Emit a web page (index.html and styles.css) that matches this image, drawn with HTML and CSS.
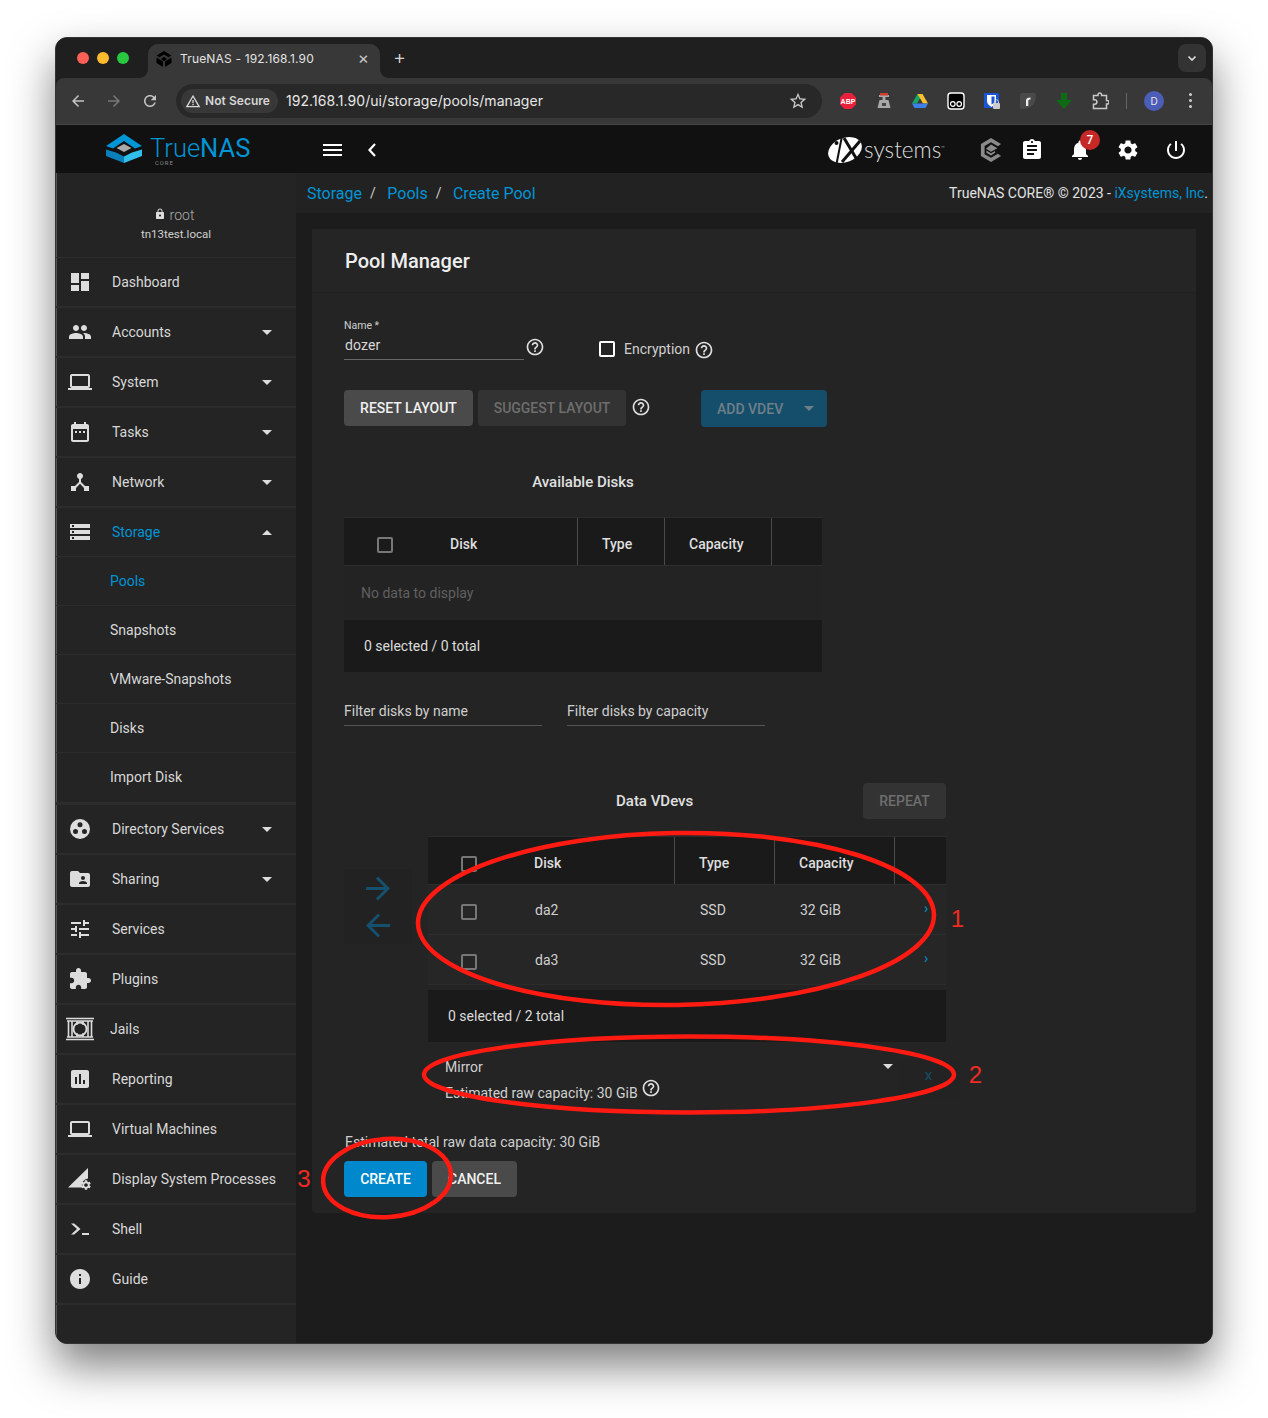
FILE: index.html
```html
<!DOCTYPE html>
<html lang="en">
<head>
<meta charset="utf-8">
<title>TrueNAS - 192.168.1.90</title>
<link rel="stylesheet" href="styles.css">
</head>
<body>
<svg class="sprite" aria-hidden="true">
  <symbol id="i-dash" viewBox="0 0 24 24"><path d="M3 13h8V3H3v10zm0 8h8v-6H3v6zm10 0h8V11h-8v10zm0-18v6h8V3h-8z"/></symbol>
  <symbol id="i-group" viewBox="0 0 24 24"><path d="M16 11c1.66 0 2.99-1.34 2.99-3S17.66 5 16 5c-1.66 0-3 1.34-3 3s1.34 3 3 3zm-8 0c1.66 0 2.99-1.34 2.99-3S9.66 5 8 5C6.34 5 5 6.34 5 8s1.34 3 3 3zm0 2c-2.33 0-7 1.17-7 3.5V19h14v-2.5c0-2.33-4.67-3.5-7-3.5zm8 0c-.29 0-.62.02-.97.05 1.16.84 1.97 1.97 1.97 3.45V19h6v-2.5c0-2.33-4.67-3.5-7-3.5z"/></symbol>
  <symbol id="i-laptop" viewBox="0 0 24 24"><path d="M20 18c1.1 0 1.99-.9 1.99-2L22 6c0-1.1-.9-2-2-2H4c-1.1 0-2 .9-2 2v10c0 1.1.9 2 2 2H0v2h24v-2h-4zM4 6h16v10H4V6z"/></symbol>
  <symbol id="i-cal" viewBox="0 0 24 24"><path d="M9 11H7v2h2v-2zm4 0h-2v2h2v-2zm4 0h-2v2h2v-2zm2-7h-1V2h-2v2H8V2H6v2H5c-1.11 0-1.99.9-1.99 2L3 20c0 1.1.89 2 2 2h14c1.1 0 2-.9 2-2V6c0-1.1-.9-2-2-2zm0 16H5V9h14v11z"/></symbol>
  <symbol id="i-net" viewBox="0 0 24 24"><path d="M17 16l-4-4V8.82C14.16 8.4 15 7.3 15 6c0-1.66-1.34-3-3-3S9 4.34 9 6c0 1.3.84 2.4 2 2.82V12l-4 4H3v5h5v-3.05l4-4.2 4 4.2V21h5v-5h-4z"/></symbol>
  <symbol id="i-storage" viewBox="0 0 24 24"><path d="M2 20h20v-4H2v4zm2-3h2v2H4v-2zM2 4v4h20V4H2zm4 3H4V5h2v2zm-4 7h20v-4H2v4zm2-3h2v2H4v-2z"/></symbol>
  <symbol id="i-dir" viewBox="0 0 24 24"><path fill-rule="evenodd" d="M12 2a10 10 0 1 0 0 20a10 10 0 0 0 0-20zM12 5.3a2.5 2.5 0 1 1 0 5a2.5 2.5 0 0 1 0-5zM7.5 12a2.5 2.5 0 1 1 0 5a2.5 2.5 0 0 1 0-5zM16.5 12a2.5 2.5 0 1 1 0 5a2.5 2.5 0 0 1 0-5z"/></symbol>
  <symbol id="i-share" viewBox="0 0 24 24"><path d="M20 6h-8l-2-2H4c-1.1 0-1.99.9-1.99 2L2 18c0 1.1.9 2 2 2h16c1.1 0 2-.9 2-2V8c0-1.1-.9-2-2-2zm-5 3c1.1 0 2 .9 2 2s-.9 2-2 2-2-.9-2-2 .9-2 2-2zm4 8h-8v-1c0-1.33 2.67-2 4-2s4 .67 4 2v1z"/></symbol>
  <symbol id="i-tune" viewBox="0 0 24 24"><path d="M3 17v2h6v-2H3zM3 5v2h10V5H3zm10 16v-2h8v-2h-8v-2h-2v6h2zM7 9v2H3v2h4v2h2V9H7zm14 4v-2H11v2h10zm-6-4h2V7h4V5h-4V3h-2v6z"/></symbol>
  <symbol id="i-plug" viewBox="0 0 24 24"><path d="M20.5 11H19V7c0-1.1-.9-2-2-2h-4V3.5C13 2.12 11.88 1 10.5 1S8 2.12 8 3.5V5H4c-1.1 0-1.99.9-1.99 2v3.8H3.5c1.49 0 2.7 1.21 2.7 2.7s-1.21 2.7-2.7 2.7H2V20c0 1.1.9 2 2 2h3.8v-1.5c0-1.49 1.21-2.7 2.7-2.7 1.49 0 2.7 1.21 2.7 2.7V22H17c1.1 0 2-.9 2-2v-4h1.5c1.38 0 2.5-1.12 2.5-2.5S21.88 11 20.5 11z"/></symbol>
  <symbol id="i-report" viewBox="0 0 24 24"><path d="M19 3H5c-1.1 0-2 .9-2 2v14c0 1.1.9 2 2 2h14c1.1 0 2-.9 2-2V5c0-1.1-.9-2-2-2zM9 17H7v-7h2v7zm4 0h-2V7h2v10zm4 0h-2v-4h2v4z"/></symbol>
  <symbol id="i-info" viewBox="0 0 24 24"><path d="M12 2C6.48 2 2 6.48 2 12s4.48 10 10 10 10-4.48 10-10S17.52 2 12 2zm1 15h-2v-6h2v6zm0-8h-2V7h2v2z"/></symbol>
  <symbol id="i-shell" viewBox="0 0 24 24"><path d="M3 6.5h3.2L12.5 12l-6.300 5.500H3L9 12z"/><path d="M14 16h7v2h-7z"/></symbol>
  <symbol id="i-gear" viewBox="0 0 24 24"><path d="M19.14 12.94c.04-.3.06-.61.06-.94 0-.32-.02-.64-.07-.94l2.03-1.58c.18-.14.23-.41.12-.61l-1.92-3.32c-.12-.22-.37-.29-.59-.22l-2.39.96c-.5-.38-1.03-.7-1.62-.94l-.36-2.54c-.04-.24-.24-.41-.48-.41h-3.84c-.24 0-.43.17-.47.41l-.36 2.54c-.59.24-1.13.57-1.62.94l-2.39-.96c-.22-.08-.47 0-.59.22L2.74 8.87c-.12.21-.08.47.12.61l2.03 1.58c-.05.3-.09.63-.09.94s.02.64.07.94l-2.03 1.58c-.18.14-.23.41-.12.61l1.92 3.32c.12.22.37.29.59.22l2.39-.96c.5.38 1.03.7 1.62.94l.36 2.54c.05.24.24.41.48.41h3.84c.24 0 .44-.17.47-.41l.36-2.54c.59-.24 1.13-.56 1.62-.94l2.39.96c.22.08.47 0 .59-.22l1.92-3.32c.12-.22.07-.47-.12-.61l-2.01-1.58zM12 15.6c-1.98 0-3.6-1.62-3.6-3.6s1.62-3.6 3.6-3.6 3.6 1.62 3.6 3.6-1.62 3.6-3.6 3.6z"/></symbol>
  <symbol id="i-help" viewBox="0 0 24 24"><path d="M11 18h2v-2h-2v2zm1-16C6.48 2 2 6.48 2 12s4.48 10 10 10 10-4.48 10-10S17.52 2 12 2zm0 18c-4.41 0-8-3.59-8-8s3.59-8 8-8 8 3.590 8 8-3.590 8-8 8zm0-14c-2.210 0-4 1.790-4 4h2c0-1.100.9-2 2-2s2 .9 2 2c0 2-3 1.750-3 5h2c0-2.250 3-2.500 3-5 0-2.210-1.790-4-4-4z"/></symbol>
  <symbol id="i-clip" viewBox="0 0 24 24"><path d="M19 3h-4.180C14.400 1.840 13.300 1 12 1c-1.300 0-2.400.84-2.820 2H5c-1.100 0-2 .9-2 2v14c0 1.100.9 2 2 2h14c1.100 0 2-.9 2-2V5c0-1.100-.9-2-2-2zm-7 0c.55 0 1 .45 1 1s-.45 1-1 1-1-.45-1-1 .45-1 1-1zm2 14H7v-2h7v2zm3-4H7v-2h10v2zm0-4H7V7h10v2z"/></symbol>
  <symbol id="i-bell" viewBox="0 0 24 24"><path d="M12 22c1.100 0 2-.9 2-2h-4c0 1.100.89 2 2 2zm6-6v-5c0-3.070-1.640-5.640-4.500-6.320V4c0-.83-.67-1.500-1.500-1.500s-1.500.67-1.500 1.500v.68C7.630 5.360 6 7.920 6 11v5l-2 2v1h16v-1l-2-2z"/></symbol>
  <symbol id="i-power" viewBox="0 0 24 24"><path d="M13 3h-2v10h2V3zm4.830 2.170l-1.420 1.420C17.990 7.860 19 9.810 19 12c0 3.870-3.130 7-7 7s-7-3.130-7-7c0-2.190 1.010-4.140 2.580-5.420L6.170 5.170C4.230 6.820 3 9.260 3 12c0 4.970 4.030 9 9 9s9-4.030 9-9c0-2.740-1.230-5.180-3.170-6.830z"/></symbol>
  <symbol id="i-star" viewBox="0 0 24 24"><path d="M22 9.240l-7.190-.62L12 2 9.190 8.630 2 9.240l5.460 4.730L5.820 21 12 17.270 18.180 21l-1.630-7.030L22 9.240zM12 15.400l-3.760 2.270 1-4.280-3.320-2.880 4.380-.38L12 6.100l1.710 4.040 4.380.38-3.320 2.880 1 4.280L12 15.400z"/></symbol>
  <symbol id="i-lock" viewBox="0 0 24 24"><path d="M18 8h-1V6c0-2.760-2.240-5-5-5S7 3.240 7 6v2H6c-1.100 0-2 .9-2 2v10c0 1.100.9 2 2 2h12c1.100 0 2-.9 2-2V10c0-1.100-.9-2-2-2zm-6 9c-1.100 0-2-.9-2-2s.9-2 2-2 2 .9 2 2-.9 2-2 2zm3.100-9H8.900V6c0-1.710 1.390-3.100 3.100-3.100 1.710 0 3.100 1.390 3.100 3.100v2z"/></symbol>
  <symbol id="i-reload" viewBox="0 0 24 24"><path d="M17.650 6.350C16.200 4.900 14.210 4 12 4c-4.420 0-7.990 3.580-7.990 8s3.570 8 7.990 8c3.730 0 6.840-2.550 7.730-6h-2.080c-.82 2.330-3.040 4-5.650 4-3.310 0-6-2.690-6-6s2.690-6 6-6c1.660 0 3.140.69 4.220 1.780L13 11h7V4l-2.350 2.350z"/></symbol>
  <symbol id="i-back" viewBox="0 0 24 24"><path d="M20 11H7.830l5.590-5.590L12 4l-8 8 8 8 1.410-1.410L7.830 13H20v-2z"/></symbol>
  <symbol id="i-fwd" viewBox="0 0 24 24"><path d="M4 11h12.170l-5.590-5.590L12 4l8 8-8 8-1.410-1.410L16.170 13H4v-2z"/></symbol>
  <symbol id="i-warn" viewBox="0 0 24 24"><path d="M12 2.500 1 21.500h22zM12 6.500l7.500 13h-15zM11 10.500v5h2v-5zM11 16.500v2h2v-2z" fill-rule="evenodd"/></symbol>
</svg>

<div class="window">
  <div class="tabstrip">
    <div class="lights"><span class="light red"></span><span class="light amber"></span><span class="light green"></span></div>
    <div class="tab">
      <svg class="favicon" viewBox="0 0 16 16"><path d="M8 0 15.500 4.500 12.500 6.300 8 3.500 3.500 6.300.5 4.500z" fill="#000"/><path d="M8 5.800 11 8 8 10.200 5 8z" fill="#000"/><path d="M.5 6.500 7 10.500V16L.5 12zM15.500 6.500 9 10.500V16L15.500 12z" fill="#000"/></svg>
      <span class="tab-title">TrueNAS - 192.168.1.90</span>
      <span class="tab-close">×</span>
    </div>
    <span class="tab-new">+</span>
    <span class="tab-search"><svg viewBox="0 0 12 12" class="tab-chev"><path d="M2.500 4.500 6 8l3.500-3.500" fill="none" stroke="#ddd" stroke-width="1.600"/></svg></span>
  </div>

  <div class="toolbar">
    <svg class="nav-ic"><use href="#i-back"/></svg>
    <svg class="nav-ic dim"><use href="#i-fwd"/></svg>
    <svg class="nav-ic"><use href="#i-reload"/></svg>
    <div class="omnibox">
      <span class="chip"><svg class="chip-ic"><use href="#i-warn"/></svg>Not Secure</span>
      <span class="url">192.168.1.90/ui/storage/pools/manager</span>
      <svg class="star"><use href="#i-star"/></svg>
    </div>
    <div class="exts">
      <span class="ext"><svg viewBox="0 0 18 18"><path d="M5.500 1h7L17 5.500v7L12.500 17h-7L1 12.500v-7z" fill="#e8203c"/><text x="9" y="11.500" text-anchor="middle" class="abp">ABP</text></svg></span>
      <span class="ext"><svg viewBox="0 0 18 18"><path d="M4 3h10v2H10.500V8H13.500L15.500 16H2.500L4.500 8H7.500V5H4z" fill="#a8a8a8"/><path d="M5 1h8v2.500H5z" fill="#d23b30"/><path d="M7 11h4v3H7z" fill="#444"/></svg></span>
      <span class="ext"><svg viewBox="0 0 18 18"><path d="M6.500 2h5L6 11.500H1z" fill="#16a765"/><path d="M11.500 2 17 11.500h-5L6.500 2z" fill="#fdc02f"/><path d="M1 11.500h16L14.500 16h-11z" fill="#3f7fe8"/></svg></span>
      <span class="ext"><svg viewBox="0 0 18 18"><rect x="1" y="1" width="16" height="16" rx="3" fill="#000" stroke="#fff" stroke-width="1.400"/><circle cx="5.800" cy="12" r="2.300" fill="none" stroke="#fff" stroke-width="1.200"/><circle cx="12.200" cy="12" r="2.300" fill="none" stroke="#fff" stroke-width="1.200"/></svg></span>
      <span class="ext"><svg viewBox="0 0 18 18"><rect x="1" y="1" width="15" height="15" rx="1" fill="#1a55d8"/><path d="M4 3h9v6c0 3-2 4.500-4.500 6C6 13.500 4 12 4 9z" fill="#fff"/><path d="M8.500 4.500H11.500V9c0 1.500-1 2.500-3 3.500z" fill="#1a55d8"/><rect x="10" y="11" width="7" height="6" rx="1" fill="#ccc"/><path d="M11.500 11V9.800a2 2 0 0 1 4 0V11" fill="none" stroke="#ccc" stroke-width="1"/></svg></span>
      <span class="ext"><svg viewBox="0 0 18 18"><path d="M3.500 1H15a2 2 0 0 1 2 2c0 8-4 14-14 14a2 2 0 0 1-2-2V3.500A2.500 2.500 0 0 1 3.500 1z" fill="#4a4a4a"/><path d="M7 14V8.500C7 6.500 8.500 5.500 11.500 5.500v2C10 7.500 9.300 8 9.300 9v5z" fill="#eee"/></svg></span>
      <span class="ext"><svg viewBox="0 0 18 18"><path d="M6 1h6v7h5l-8 9-8-9h5z" fill="#0d6b14"/></svg></span>
      <span class="ext"><svg viewBox="0 0 18 18"><path d="M2.500 3.500H7V2.800a1.800 1.800 0 0 1 3.600 0v.7h4.900v4.900h.7a1.800 1.800 0 0 1 0 3.600h-.7v4.500H2.500v-4.300h1.200a2.200 2.200 0 0 0 0-4.400H2.500z" fill="none" stroke="#c8c8c8" stroke-width="1.500"/></svg></span>
      <span class="ext-sep"></span>
      <span class="avatar">D</span>
      <span class="dots"><i></i><i></i><i></i></span>
    </div>
  </div>

  <header class="apphead">
    <div class="brand">
      <svg class="brand-mark" viewBox="0 0 36 30"><path d="M18 0 36 12 29 14.500 18 7 7 14.500 0 12z" fill="#0095d5"/><path d="M0 15.500 10 18.500 18 22.500V29L0 22z" fill="#0a7fb8"/><path d="M36 15.500 26 18.500 18 22.500V29L36 22z" fill="#31beec"/><path d="M18 10 25.500 14 18 18 10.500 14z" fill="#aaa"/></svg>
      <div class="brand-words"><span class="brand-name"><span class="brand-true">True</span>NAS</span><span class="brand-core">CORE</span></div>
    </div>
    <div class="head-main">
      <span class="burger"><i></i><i></i><i></i></span>
      <svg class="collapse" viewBox="0 0 10 16"><path d="M8 2 2.500 8 8 14" fill="none" stroke="#fff" stroke-width="2.200"/></svg>
      <div class="ix">
        <svg class="ix-mark" viewBox="0 0 36 28"><ellipse cx="18" cy="14" rx="17.500" ry="12" transform="rotate(-22 18 14)" fill="#fff"/><path d="M9.500 28 15 0" stroke="#111" stroke-width="2"/><path d="M17 2 32 27" stroke="#111" stroke-width="3"/><path d="M33 5 15 26" stroke="#111" stroke-width="3"/><circle cx="9.500" cy="7" r="2" fill="#111"/></svg>
        <span class="ix-word">systems</span><span class="ix-tm">™</span>
      </div>
      <span class="hcell narrow"><svg viewBox="0 0 24 28" class="ticker"><path d="M12 1 23 7.500 19.500 10 12 5.500 5 9.500V18.500L12 22.500 19.500 18 23 20.500 12 27 1 20.500V7.500z" fill="#8a8a8a"/><path d="M12 8 19 12 12 16 6.500 12.500zM7 14.500 12 17.500 16.500 15V17L12 20 7 17z" fill="#8a8a8a"/></svg></span>
      <span class="hcell"><svg class="hic"><use href="#i-clip"/></svg></span>
      <span class="hcell"><svg class="hic"><use href="#i-bell"/></svg><span class="badge">7</span></span>
      <span class="hcell"><svg class="hic"><use href="#i-gear"/></svg></span>
      <span class="hcell"><svg class="hic"><use href="#i-power"/></svg></span>
    </div>
  </header>

  <div class="body-row">
    <nav class="side">
      <div class="who">
        <div class="who-name"><svg class="who-lock"><use href="#i-lock"/></svg>root</div>
        <div class="who-host">tn13test.local</div>
      </div>
      <a class="row"><svg class="ic"><use href="#i-dash"/></svg><span>Dashboard</span></a>
      <a class="row"><svg class="ic"><use href="#i-group"/></svg><span>Accounts</span><i class="caret"></i></a>
      <a class="row"><svg class="ic"><use href="#i-laptop"/></svg><span>System</span><i class="caret"></i></a>
      <a class="row"><svg class="ic"><use href="#i-cal"/></svg><span>Tasks</span><i class="caret"></i></a>
      <a class="row"><svg class="ic"><use href="#i-net"/></svg><span>Network</span><i class="caret"></i></a>
      <a class="row row-open"><svg class="ic"><use href="#i-storage"/></svg><span class="blue">Storage</span><i class="caret up"></i></a>
      <div class="sub">
        <a class="sub-row blue">Pools</a>
        <a class="sub-row">Snapshots</a>
        <a class="sub-row">VMware-Snapshots</a>
        <a class="sub-row">Disks</a>
        <a class="sub-row">Import Disk</a>
      </div>
      <a class="row"><svg class="ic"><use href="#i-dir"/></svg><span>Directory Services</span><i class="caret"></i></a>
      <a class="row"><svg class="ic"><use href="#i-share"/></svg><span>Sharing</span><i class="caret"></i></a>
      <a class="row"><svg class="ic"><use href="#i-tune"/></svg><span>Services</span></a>
      <a class="row"><svg class="ic"><use href="#i-plug"/></svg><span>Plugins</span></a>
      <a class="row"><svg class="ic-jail" viewBox="0 0 28 24"><path d="M0 1.500h28M0 22.500h28M1 4h26M1 20h26" stroke="#ddd" stroke-width="1.400"/><path d="M2.500 4v16M6 4v16M22 4v16M25.500 4v16" stroke="#ddd" stroke-width="1.600"/><circle cx="14" cy="12" r="6.500" fill="none" stroke="#ddd" stroke-width="1.800"/><path d="M11 4v4M17 4v4M11 16v4M17 16v4" stroke="#ddd" stroke-width="1.400"/></svg><span>Jails</span></a>
      <a class="row"><svg class="ic"><use href="#i-report"/></svg><span>Reporting</span></a>
      <a class="row"><svg class="ic"><use href="#i-laptop"/></svg><span>Virtual Machines</span></a>
      <a class="row"><svg class="ic" viewBox="0 0 24 24"><path d="M0 20.500 20 1V11.500a7 7 0 0 0-6 9z" fill="#ddd"/><use href="#i-gear" x="12" y="12" width="12" height="12"/></svg><span>Display System Processes</span></a>
      <a class="row"><svg class="ic"><use href="#i-shell"/></svg><span>Shell</span></a>
      <a class="row"><svg class="ic"><use href="#i-info"/></svg><span>Guide</span></a>
    </nav>

    <main class="content">
      <div class="crumbs">
        <div class="crumb-path"><a class="blue">Storage</a><em>/</em><a class="blue">Pools</a><em>/</em><a class="blue">Create Pool</a></div>
        <div class="copyright">TrueNAS CORE® © 2023 - <a class="blue">iXsystems, Inc</a>.</div>
      </div>
      <section class="card">
        <h1 class="card-title">Pool Manager</h1>
        <div class="card-body">
          <div class="name-row">
            <div class="field">
              <label class="field-label">Name *</label>
              <div class="field-value">dozer</div>
            </div>
            <svg class="help help-name"><use href="#i-help"/></svg>
            <span class="check check-white"></span>
            <span class="enc">Encryption</span>
            <svg class="help"><use href="#i-help"/></svg>
          </div>

          <div class="actions">
            <button class="btn btn-grey">RESET LAYOUT</button>
            <button class="btn btn-off">SUGGEST LAYOUT</button>
            <svg class="help help-action"><use href="#i-help"/></svg>
            <button class="btn btn-add">ADD VDEV<i class="add-caret"></i></button>
          </div>

          <h2 class="avail-title">Available Disks</h2>
          <div class="dtable avail">
            <div class="dhead">
              <div class="cell c-check"><span class="check"></span><b>Disk</b></div>
              <div class="cell"><b>Type</b></div>
              <div class="cell"><b>Capacity</b></div>
              <div class="cell"></div>
            </div>
            <div class="empty">No data to display</div>
            <div class="dfoot">0 selected / 0 total</div>
          </div>

          <div class="filters">
            <div class="filter">Filter disks by name</div>
            <div class="filter">Filter disks by capacity</div>
          </div>

          <div class="vdev-head">
            <h2 class="vdev-title">Data VDevs</h2>
            <button class="btn btn-off btn-repeat">REPEAT</button>
          </div>
          <div class="vdev-wrap">
            <div class="movers">
              <svg class="mover"><use href="#i-fwd"/></svg>
              <svg class="mover"><use href="#i-back"/></svg>
            </div>
            <div class="dtable vdevs">
              <div class="dhead">
                <div class="cell c-check"><span class="check"></span><b>Disk</b></div>
                <div class="cell"><b>Type</b></div>
                <div class="cell"><b>Capacity</b></div>
                <div class="cell"></div>
              </div>
              <div class="drow">
                <div class="cell c-check"><span class="check"></span><span>da2</span></div>
                <div class="cell">SSD</div>
                <div class="cell">32 GiB</div>
                <div class="cell c-more">›</div>
              </div>
              <div class="drow drow-last">
                <div class="cell c-check"><span class="check"></span><span>da3</span></div>
                <div class="cell">SSD</div>
                <div class="cell">32 GiB</div>
                <div class="cell c-more">›</div>
              </div>
              <div class="dfoot">0 selected / 2 total</div>
            </div>
          </div>

          <div class="layout-row">
            <div class="layout-main">
              <div class="layout-select"><span>Mirror</span><i class="caret"></i></div>
              <div class="layout-est">Estimated raw capacity: 30 GiB<svg class="help help-est"><use href="#i-help"/></svg></div>
            </div>
            <span class="layout-x">x</span>
          </div>

          <div class="total">Estimated total raw data capacity: 30 GiB</div>
          <div class="final">
            <button class="btn btn-blue">CREATE</button>
            <button class="btn btn-grey btn-cancel">CANCEL</button>
          </div>
        </div>
      </section>
    </main>
  </div>
</div>

<svg class="marks" viewBox="0 0 1268 1418">
  <ellipse cx="676" cy="919" rx="258" ry="86" transform="rotate(-1 676 919)" class="mark"/>
  <ellipse cx="689" cy="1074.500" rx="265" ry="38" class="mark"/>
  <ellipse cx="387" cy="1178" rx="64" ry="39" transform="rotate(-4 387 1178)" class="mark"/>
  <text x="957.500" y="927" class="mark-num">1</text>
  <text x="975.500" y="1083" class="mark-num">2</text>
  <text x="304" y="1187" class="mark-num">3</text>
</svg>
</body>
</html>
```

FILE: styles.css
```css
* { box-sizing: border-box; }
html, body { margin: 0; height: 1418px; overflow: hidden; }
body {
  background: #fff;
  padding: 37px 55px 0;
  font-family: Roboto, "Liberation Sans", sans-serif;
  font-size: 14px;
  color: #dcdcdc;
  position: relative;
}
a { color: inherit; text-decoration: none; }
.blue { color: #0095d5; }
svg { fill: currentColor; display: block; flex: none; }
.sprite { position: absolute; width: 0; height: 0; }

.window {
  width: 1158px;
  height: 1307px;
  border: 1px solid #333;
  border-radius: 12px;
  overflow: hidden;
  background: #1e1e1e;
  display: flex;
  flex-direction: column;
  box-shadow: 0 22px 44px rgba(0, 0, 0, .5);
}

/* Browser chrome */
.tabstrip {
  height: 40px;
  background: #1f1f1f;
  display: flex;
  align-items: flex-end;
  flex: none;
  font-family: Inter, Roboto, sans-serif;
}
.lights { display: flex; gap: 8px; align-self: flex-start; margin: 14px 0 0 21px; width: 71px; }
.light { width: 12px; height: 12px; border-radius: 50%; }
.red { background: #fe5f57; }
.amber { background: #febb2e; }
.green { background: #28c840; }
.tab {
  width: 232px;
  height: 34px;
  background: #383838;
  border-radius: 10px 10px 0 0;
  display: flex;
  align-items: center;
  padding: 0 11px 5px 8px;
  color: #e3e3e3;
  font-size: 12px;
  position: relative;
}
.tab::before, .tab::after {
  content: "";
  position: absolute;
  bottom: 0;
  width: 8px;
  height: 8px;
}
.tab::before { left: -8px; background: radial-gradient(circle at 0 0, transparent 7.5px, #383838 8px); }
.tab::after { right: -8px; background: radial-gradient(circle at 100% 0, transparent 7.5px, #383838 8px); }
.favicon { width: 16px; height: 16px; margin-right: 8px; }
.tab-title { flex: 1; letter-spacing: .17px; }
.tab-close { font-size: 17px; color: #c8c8c8; line-height: 1; }
.tab-new { font-size: 20px; font-weight: 300; color: #d8d8d8; margin: 0 0 10px 13px; line-height: 22px; }
.tab-search {
  margin: 0 6px 6px auto;
  width: 28px;
  height: 28px;
  border-radius: 8px;
  background: #333;
  display: flex;
  align-items: center;
  justify-content: center;
}
.tab-chev { width: 12px; height: 12px; }

.toolbar {
  height: 47px;
  flex: none;
  background: #383838;
  border-radius: 8px 8px 0 0;
  border-bottom: 1px solid #454545;
  display: flex;
  align-items: center;
  padding: 0 0 1px 13px;
  font-family: Inter, Roboto, sans-serif;
}
.nav-ic { width: 18px; height: 18px; margin-right: 18px; color: #c4c4c4; }
.nav-ic.dim { color: #777; }
.omnibox {
  width: 646px;
  height: 34px;
  margin-left: -1px;
  border-radius: 17px;
  background: #282828;
  display: flex;
  align-items: center;
  padding: 0 14px 0 5px;
}
.chip {
  height: 24px;
  width: 97px;
  border-radius: 12px;
  background: #383838;
  display: flex;
  align-items: center;
  gap: 4px;
  padding-left: 4px;
  font-size: 12px;
  font-weight: 600;
  color: #d6d6d6;
  white-space: nowrap;
  letter-spacing: .05px;
}
.chip-ic { width: 16px; height: 16px; }
.url { margin-left: 8px; flex: 1; font-size: 14px; color: #e6e6e6; letter-spacing: .06px; }
.star { width: 20px; height: 20px; color: #c8c8c8; }
.exts { display: flex; align-items: center; margin-left: 8px; }
.ext { width: 36px; height: 36px; display: flex; align-items: center; justify-content: center; }
.ext svg { width: 18px; height: 18px; }
.abp { font: 700 7px "Liberation Sans", sans-serif; fill: #fff; }
.ext-sep { width: 1px; height: 16px; background: #666; margin: 0 17px 0 8px; }
.avatar {
  width: 20px; height: 20px; border-radius: 50%;
  background: #4c5db8; color: #e8e8e8;
  font-size: 10px; display: flex; align-items: center; justify-content: center;
}
.dots { display: flex; flex-direction: column; gap: 3px; margin-left: 25px; }
.dots i { width: 3px; height: 3px; border-radius: 50%; background: #ccc; }

/* App header */
.apphead { height: 48px; flex: none; background: #111; display: flex; }
.brand { width: 240px; display: flex; align-items: center; padding-left: 50px; flex: none; }
.brand-mark { width: 36px; height: 30px; margin-right: 8px; }
.brand-words { display: flex; flex-direction: column; align-items: flex-start; margin-top: 4px; }
.brand-name { font-family: Roboto, sans-serif; font-size: 25.500px; line-height: 24px; color: #0095d5; }
.brand-true { font-weight: 300; }
.brand-core { font-size: 6px; line-height: 6px; letter-spacing: .9px; color: #888; margin-left: 5px; }
.head-main { flex: 1; display: flex; align-items: center; padding: 2px 12px 0 27px; }
.burger { display: flex; flex-direction: column; gap: 3px; width: 19px; }
.burger i { height: 2px; background: #fff; }
.collapse { width: 10px; height: 16px; margin-left: 25px; }
.ix { display: flex; align-items: center; margin-left: auto; margin-right: 29px; }
.ix-mark { width: 36px; height: 28px; }
.ix-word { font-family: Lato, sans-serif; font-weight: 300; font-size: 22.500px; color: #dedede; margin-left: 1px; line-height: 1; }
.ix-tm { font-size: 6px; color: #aaa; align-self: flex-start; margin-top: 8px; }
.hcell { width: 48px; height: 46px; display: flex; align-items: center; justify-content: center; position: relative; color: #fff; }
.hcell.narrow { width: 34px; }
.hic { width: 24px; height: 24px; }
.ticker { width: 22px; height: 26px; }
.badge {
  position: absolute; top: 3px; left: 24px;
  width: 20px; height: 20px; border-radius: 50%;
  background: #c62828; color: #fff;
  font-size: 12px; font-weight: 500;
  display: flex; align-items: center; justify-content: center;
}

/* Sidebar */
.body-row { flex: 1; display: flex; min-height: 0; }
.side { width: 240px; flex: none; background: #242424; box-shadow: inset 1px 0 #555; }
.who { height: 85px; padding-top: 34px; border-bottom: 1px solid #2e2e2e; text-align: center; }
.who-name { display: flex; justify-content: center; align-items: center; gap: 4px; color: #aaa; font-size: 14px; line-height: 16px; font-weight: 300; padding-right: 4px; }
.who-lock { width: 12px; height: 12px; color: #ddd; margin-top: -3px; }
.who-host { font-size: 11.500px; line-height: 14px; margin-top: 4px; color: #cfcfcf; }
.row {
  height: 50px;
  border-bottom: 2px solid #2c2c2c;
  display: flex;
  align-items: center;
  padding: 0 24px 0 12px;
  color: #d8d8d8;
  font-size: 14px;
  white-space: nowrap;
}
.row span { flex: 1; }
.ic { width: 24px; height: 24px; margin-right: 20px; color: #ddd; }
.ic-jail { width: 28px; height: 24px; margin: 0 16px 0 -2px; color: #ddd; }
.row-open { height: 49px; border-bottom: 1px solid #2c2c2c; }
.caret { width: 0; height: 0; border-left: 5px solid transparent; border-right: 5px solid transparent; border-top: 5px solid #ddd; display: block; }
.caret.up { border-top: 0; border-bottom: 5px solid #ddd; }
.sub { border-bottom: 3px solid #2c2c2c; }
.sub-row {
  display: flex; align-items: center;
  height: 49px;
  padding-left: 54px;
  border-bottom: 1px solid #2c2c2c;
  font-size: 14px;
  color: #d8d8d8;
}
.sub-row.blue { color: #0095d5; }
.sub-row:last-child { border-bottom-color: transparent; }

/* Content */
.content { flex: 1; background: #1c1c1c; min-width: 0; }
.crumbs {
  height: 40px; background: #222;
  display: flex; align-items: center; justify-content: space-between;
  padding: 0 4px 0 11px;
}
.crumb-path { display: flex; align-items: center; font-size: 16px; }
.crumb-path em { font-style: normal; font-size: 14px; color: #ccc; margin: 0 11.500px 0 8px; }
.copyright { font-size: 14px; color: #e2e2e2; }
.card { margin: 16px; background: #242424; border-radius: 4px; height: 984px; }
.card-title {
  margin: 0; height: 64px; padding-left: 33px;
  font-size: 20px; font-weight: 500; color: #eee;
  display: flex; align-items: center;
  background: #252525;
  border-bottom: 1px solid #212121;
}
.card-body { padding: 0 32px; font-size: 14px; }

.name-row { display: flex; align-items: flex-start; padding-top: 27px; }
.field { width: 180px; border-bottom: 1px solid #666; height: 40px; }
.field-label { display: block; font-size: 10.500px; line-height: 12px; color: #cfcfcf; }
.field-value { font-size: 14px; line-height: 16px; margin-top: 5px; padding-left: 1px; color: #d8d8d8; letter-spacing: .1px; }
.help { width: 20px; height: 20px; color: #dedede; }
.help-name { margin: 17px 0 0 1px; }
.check { width: 16px; height: 16px; border: 2px solid #777; border-radius: 2px; display: block; flex: none; }
.check-white { border-color: #fff; margin: 21px 0 0 54px; }
.enc { margin: 21px 4px 0 9px; line-height: 16px; color: #cfcfcf; }
.enc + .help { margin-top: 20px; }

.actions { display: flex; align-items: flex-start; margin-top: 30px; }
.btn {
  height: 36px; border: 0; border-radius: 4px;
  font: 500 14px Roboto, sans-serif;
  display: flex; align-items: center; justify-content: center;
  padding: 0;
}
.btn-grey { background: #4a4a4a; color: #f0f0f0; width: 129px; }
.btn-off { background: #333; color: #6e6e6e; width: 148px; margin-left: 5px; }
.help-action { margin: 7px 0 0 5px; }
.btn-add { background: #154e6b; color: #6f7f88; width: 126px; height: 37px; margin-left: 50px; justify-content: flex-start; padding-left: 16px; }
.add-caret { margin-left: 21px; width: 0; height: 0; border-left: 5px solid transparent; border-right: 5px solid transparent; border-top: 5px solid #6f7f88; }

.avail-title { width: 478px; margin: 47px 0 0; text-align: center; font-size: 15px; font-weight: 500; line-height: 16px; color: #e0e0e0; }
.dtable { font-size: 14px; }
.avail { width: 478px; margin-top: 27px; }
.dhead, .drow { display: grid; }
.avail .dhead { grid-template-columns: 234px 87px 107px 50px; }
.vdevs .dhead, .vdevs .drow { grid-template-columns: 247px 100px 120px 51px; }
.dhead { height: 49px; background: #1a1a1a; border-top: 1px solid #2c2c2c; border-bottom: 1px solid #2e2e2e; }
.dhead b { font-weight: 500; color: #dedede; }
.dhead .cell { padding-top: 4px; }
.cell { display: flex; align-items: center; padding-left: 24px; border-right: 1px solid #4a4a4a; }
.cell:last-child { border-right: 0; }
.c-check { padding-left: 33px; }
.dhead .c-check { padding-left: 33px; }
.c-check .check + b, .c-check .check + span { margin-left: 57px; }
.dhead .check { margin-top: 2px; }
.drow .check { margin-top: 4px; }
.drow .check + span { margin-left: 58px; }
.empty { height: 54px; background: #232323; color: #606060; display: flex; align-items: center; padding-left: 17px; }
.dfoot { height: 52px; background: #1a1a1a; display: flex; align-items: center; padding-left: 20px; color: #dcdcdc; }

.filters { display: flex; gap: 25px; margin-top: 31px; }
.filter { width: 198px; height: 23px; line-height: 17px; border-bottom: 1px solid #555; color: #cfcfcf; }

.vdev-head { display: flex; width: 602px; margin-top: 57px; align-items: center; }
.vdev-title { margin: 0 0 0 272px; font-size: 15px; font-weight: 500; color: #e0e0e0; line-height: 16px; }
.btn-repeat { margin-left: auto; width: 83px; }
.vdev-wrap { display: flex; margin-top: 17px; align-items: flex-start; }
.movers { width: 68px; height: 75px; margin: 33px 16px 0 0; background: #222; color: #15506f; display: flex; flex-direction: column; align-items: center; justify-content: center; }
.mover { width: 36px; height: 37px; }
.vdevs { width: 518px; }
.vdevs .drow .cell { border-right: 0; padding-left: 25px; }
.vdevs .drow .c-check { padding-left: 33px; }
.vdevs .drow { height: 50px; background: #262626; border-bottom: 1px solid #2e2e2e; color: #d0d0d0; }
.vdevs .drow-last { border-bottom-color: #2c2c2c; margin-bottom: 5px; }
.vdevs .drow .c-more { color: #0095d5; font-size: 14px; padding-left: 29px; padding-bottom: 4px; }

.layout-row { display: flex; margin: 17px 0 0 101px; width: 520px; }
.layout-main { width: 448px; }
.layout-select { display: flex; justify-content: space-between; align-items: center; line-height: 16px; color: #d0d0d0; }
.layout-select .caret { margin-top: -2px; }
.layout-est { display: flex; line-height: 16px; margin-top: 10px; color: #d0d0d0; }
.help-est { margin: -7px 0 0 3px; }
.layout-x { margin-left: 4px; width: 63px; height: 42px; text-align: center; color: #154e6b; font-size: 15px; line-height: 32px; background: #232323; }

.total { margin-top: 33px; line-height: 16px; color: #d0d0d0; padding-left: 1px; }
.final { display: flex; margin-top: 11px; gap: 5px; }
.btn-blue { background: #0088cc; color: #fff; width: 83px; }
.btn-cancel { width: 85px; }

/* Hand-drawn annotations over the screenshot */
.marks { position: absolute; left: 0; top: 0; width: 1268px; height: 1418px; pointer-events: none; }
.mark { fill: none; stroke: #ff1a12; stroke-width: 4.500; }
.mark-num { font: 300 24px "Liberation Sans", sans-serif; fill: #f02c22; text-anchor: middle; }
```
